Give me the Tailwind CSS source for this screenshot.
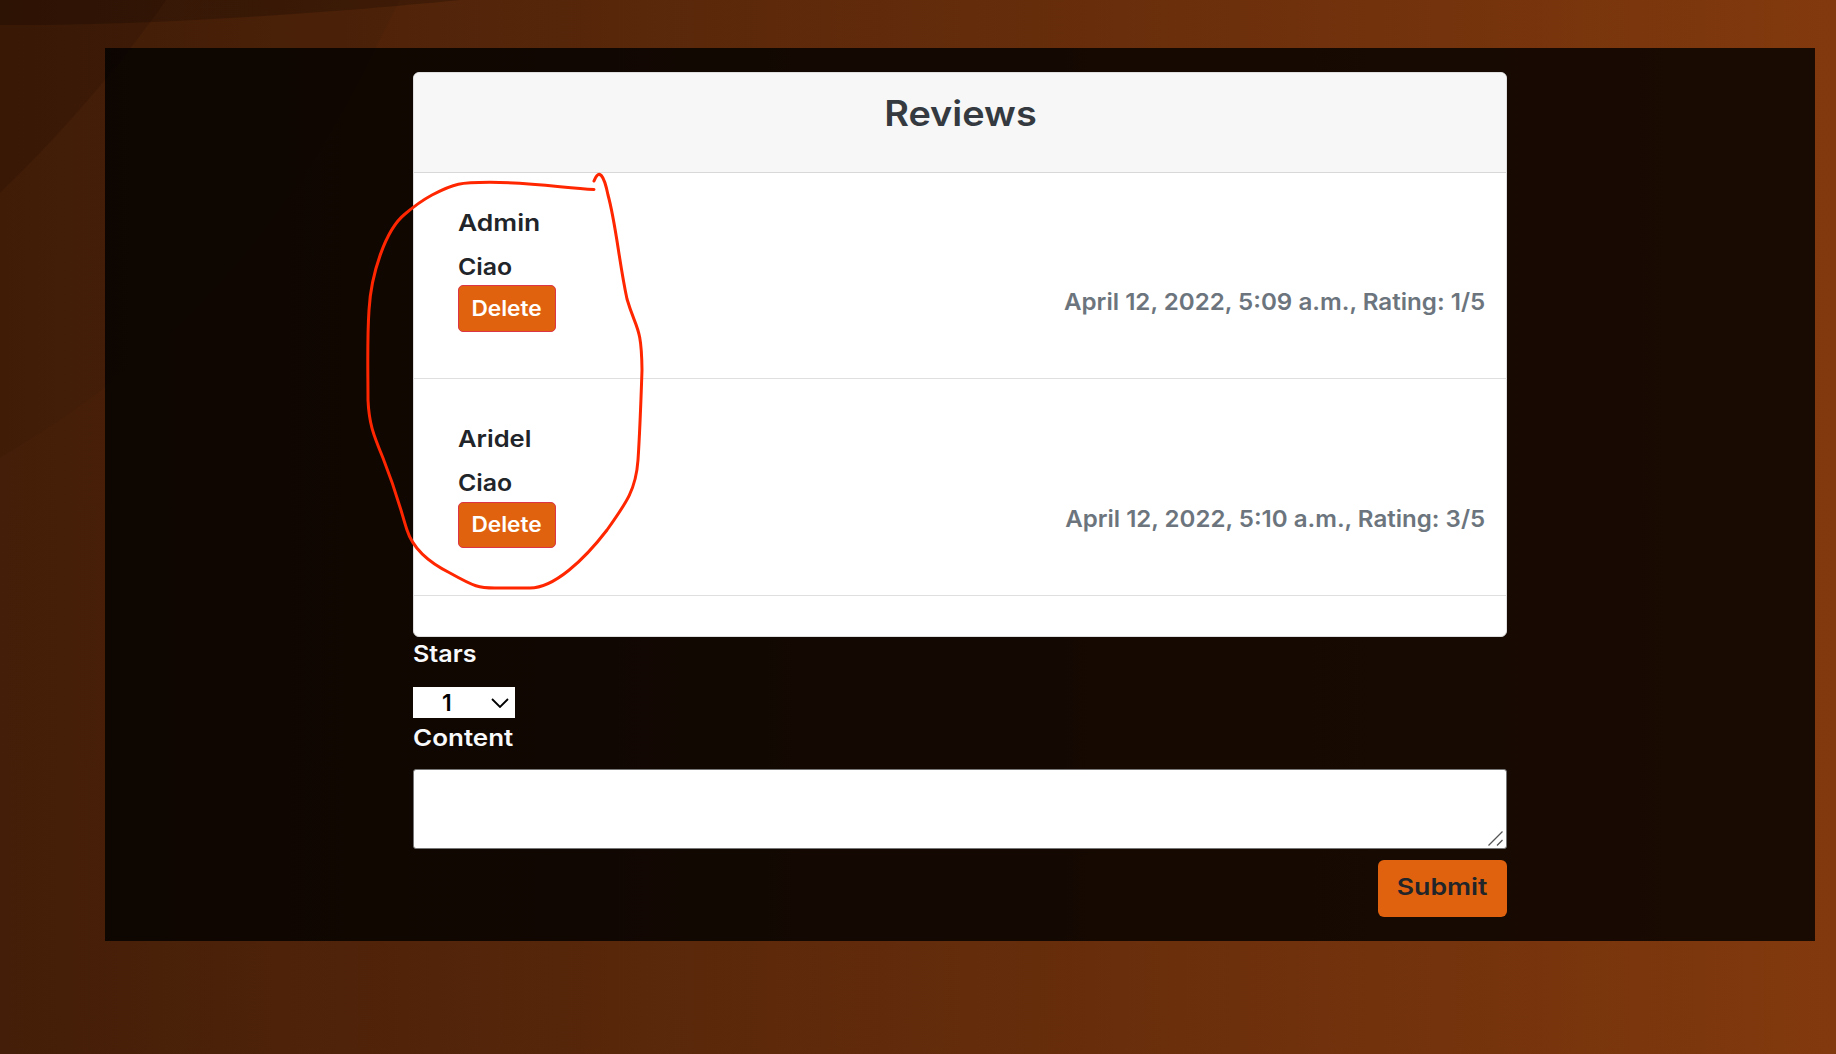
<!DOCTYPE html>
<html lang="en">
<head>
<meta charset="utf-8">
<title>Reviews</title>
<script src="https://cdn.jsdelivr.net/npm/@tailwindcss/browser@4"></script>
</head>
<body class="relative h-[1054px] w-[1836px] overflow-hidden bg-linear-to-r from-[#441e08] to-[#82390d] pt-12 pl-[105px] font-['Inter',sans-serif] text-[23px] leading-9 font-semibold">
  <svg class="absolute inset-0 h-full w-full" viewBox="0 0 1836 1054" fill="#000">
    <path fill-opacity=".2" d="M0 0H460C340 12 150 26 0 25Z"/>
    <path fill-opacity=".1" d="M0 0H166C130 52 70 126 0 193Z"/>
    <path fill-opacity=".05" d="M0 0H400C330 140 250 310 0 458Z"/>
  </svg>
  <main class="relative h-[893px] w-[1710px] bg-black/80 px-[308px] pt-6">
    <section class="h-[565px] w-[1094px] overflow-hidden rounded-md border border-[#dfdfdf] bg-white text-[#212529]">
      <h1 class="h-[100px] border-b border-[#d8d8d8] bg-[#f7f7f7] pt-4 text-center text-[35px] leading-[48px] text-[#343a40]"><span class="inline-block scale-x-[1.083]">Reviews</span></h1>
      <article class="flex h-[206px] items-start justify-between border-b border-[#dfdfdf] pt-8 pr-[21px] pl-11">
        <div>
          <p><span class="inline-block origin-left scale-x-[1.15]">Admin</span></p>
          <p class="mt-2"><span class="inline-block origin-left scale-x-[1.08]">Ciao</span></p>
          <button class="block h-[47px] w-[98px] rounded-[5px] border border-[#dc3545] bg-[#e0620f] text-[21px] text-white"><span class="inline-block scale-x-[1.08]">Delete</span></button>
        </div>
        <p class="mt-[79px] text-[#6c757d]"><span class="inline-block origin-right scale-x-[1.05]">April 12, 2022, 5:09 a.m., Rating: 1/5</span></p>
      </article>
      <article class="flex h-[217px] items-start justify-between border-b border-[#dfdfdf] pt-[42px] pr-[21px] pl-11">
        <div>
          <p><span class="inline-block origin-left scale-x-[1.11]">Aridel</span></p>
          <p class="mt-2"><span class="inline-block origin-left scale-x-[1.08]">Ciao</span></p>
          <button class="mt-px block h-[46px] w-[98px] rounded-[5px] border border-[#dc3545] bg-[#e0620f] text-[21px] text-white"><span class="inline-block scale-x-[1.08]">Delete</span></button>
        </div>
        <p class="mt-20 text-[#6c757d]"><span class="inline-block origin-right scale-x-[1.047]">April 12, 2022, 5:10 a.m., Rating: 3/5</span></p>
      </article>
    </section>
    <form class="flex flex-col text-[#f8f9fa]">
      <label class="h-[50px] leading-[34px]"><span class="inline-block origin-left scale-x-[1.09]">Stars</span></label>
      <div class="flex h-[31px] w-[102px] items-center justify-between bg-white pr-1.5 pl-[29px] text-black"><span>1</span>
        <svg class="h-[10px] w-[18px]" viewBox="0 0 18 10" fill="none" stroke="#000" stroke-width="1.8"><path d="M1 1l8 8 8-8"/></svg>
      </div>
      <label class="mt-[3px] h-12 leading-[34px]"><span class="inline-block origin-left scale-x-[1.13]">Content</span></label>
      <div class="flex h-20 items-end justify-end rounded-[3px] border border-[#767676] bg-white pr-[3px] pb-[2px]">
        <svg class="h-[15px] w-[15px]" viewBox="0 0 15 15" fill="none" stroke="#555" stroke-width="1.3"><path d="M.5 14.5l14-14M9 14.5l5.500-5.500"/></svg>
      </div>
      <button class="mt-[11px] h-[57px] w-[129px] self-end rounded-md bg-[#e0620f] pb-1 text-[#212529]"><span class="inline-block scale-x-[1.16]">Submit</span></button>
    </form>
  </main>
  <svg class="absolute inset-0 h-full w-full" viewBox="0 0 1836 1054" fill="none" stroke="#ff2600" stroke-width="3" stroke-linecap="round" stroke-linejoin="round">
    <path d="M594 189.500C565 188 532 182.500 490 182.300C460 182.500 455 183 432 195C421 201 412 208 405 214C385 230 371 275 369 310C367 340 368 370 368 400C369 423 373 434 383 458C398 496 402 515 407 530C413 549 430 563 450 573C475 587 479 588 495 588H530C554 588 584 560 607 530C627 502 636 489 638 460C640 430 641 400 642 370C641.500 325 636 330 627 299C619 262 616 224 608 195C604 175 599 168 594 181"/>
  </svg>
</body>
</html>
